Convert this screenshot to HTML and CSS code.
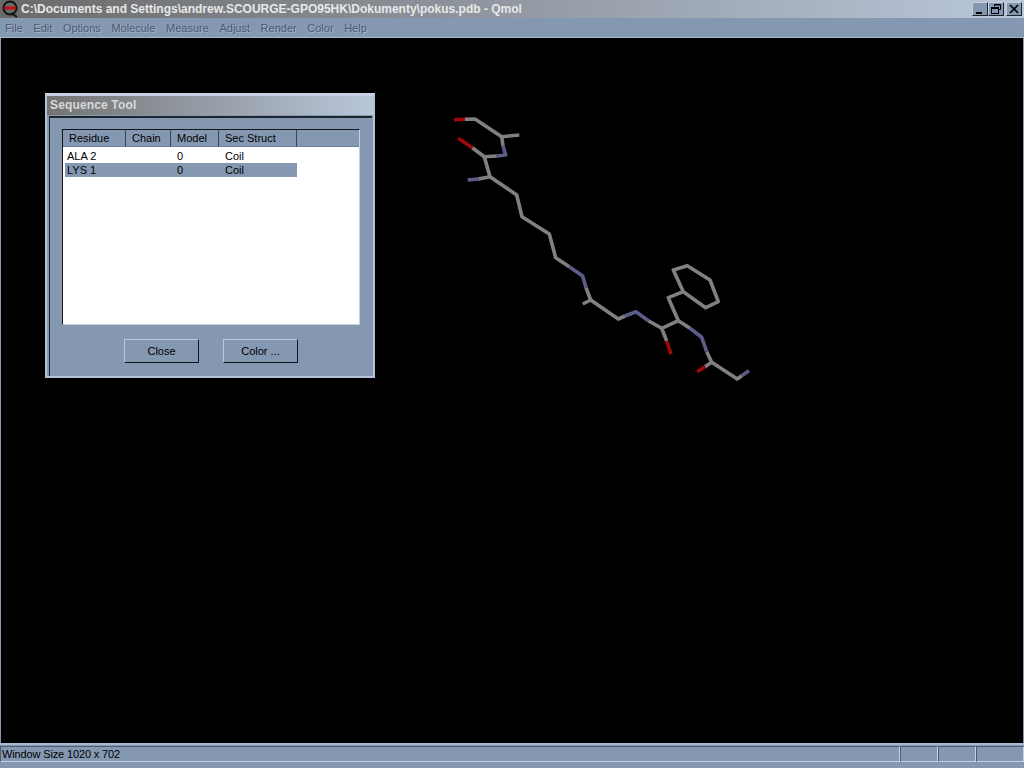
FILE: index.html
```html
<!DOCTYPE html>
<html lang="en">
<head>
    <meta charset="UTF-8">
    <title>pokus.pdb - Qmol</title>
    <link rel="stylesheet" href="styles.css">
</head>
<body>
    <div class="app">
        <div class="titlebar">
            <svg class="app-icon" width="18" height="18" viewBox="0 0 18 18">
                <circle cx="9" cy="8" r="6.5" fill="none" stroke="#111" stroke-width="2"/>
                <path d="M3 8H15" stroke="#c01010" stroke-width="3"/>
                <path d="M10 13L16 17" stroke="#111" stroke-width="2"/>
            </svg>
            <span class="title-text">C:\Documents and Settings\andrew.SCOURGE-GPO95HK\Dokumenty\pokus.pdb - Qmol</span>
            <div class="win-buttons">
                <button class="win-btn">
                    <svg width="14" height="12" viewBox="0 0 14 12"><path d="M3 10H9" stroke="#000" stroke-width="2"/></svg>
                </button>
                <button class="win-btn">
                    <svg width="14" height="12" viewBox="0 0 14 12" fill="none" stroke="#000"><path d="M5.5 3.5V1.5H11.5V6.5H9.5"/><path d="M5.5 2H11.5"/><rect x="2.5" y="4.5" width="7" height="6"/><path d="M2.5 5.5H9.5"/></svg>
                </button>
                <button class="win-btn close">
                    <svg width="14" height="12" viewBox="0 0 14 12"><path d="M3 2L11 10M11 2L3 10" stroke="#000" stroke-width="1.6"/></svg>
                </button>
            </div>
        </div>

        <div class="menubar">
            <span class="menu-item">File</span>
            <span class="menu-item">Edit</span>
            <span class="menu-item">Options</span>
            <span class="menu-item">Molecule</span>
            <span class="menu-item">Measure</span>
            <span class="menu-item">Adjust</span>
            <span class="menu-item">Render</span>
            <span class="menu-item">Color</span>
            <span class="menu-item">Help</span>
        </div>

        <div class="canvas">
            <svg class="molecule" width="1024" height="768" viewBox="0 0 1024 768">
                <g class="bond">
                    <polyline points="465,119.3 475,119 501.7,136.7 503,146"/>
                    <polyline points="501.7,136.7 519.3,135"/>
                    <polyline points="496.7,156 484.3,156.7 472.3,147.7"/>
                    <polyline points="484.3,156.7 490,176.7 478.3,179"/>
                    <polyline points="490,176.7 516.7,195 522,216.7 549.3,234 555.7,257.7 569.3,266.7"/>
                    <polyline points="586,287.7 590.7,300 582.7,304"/>
                    <polyline points="590.7,300 618.3,319 625,316"/>
                    <polyline points="648.3,320.7 661.7,328.3 678.3,320.7 668.3,297.7 683.3,291.7"/>
                    <polyline points="683.3,291.7 673.3,270 687.3,265.7 710,280 718.3,301.7 705.7,307.7 683.3,291.7"/>
                    <polyline points="661.7,328.3 666.7,341"/>
                    <polyline points="678.3,320.7 690,328.3"/>
                    <polyline points="706.7,351.7 711.7,362.3 705,366.7"/>
                    <polyline points="711.7,362.3 737.3,379 741.7,375.7"/>
                </g>
                <g class="bond nitrogen">
                    <polyline points="503,146 505.7,155 496.7,156"/>
                    <polyline points="478.3,179 467.7,180"/>
                    <polyline points="569.3,266.7 582.7,276 586,287.7"/>
                    <polyline points="625,316 636,311.7 648.3,320.7"/>
                    <polyline points="690,328.3 701.7,337.3 706.7,351.7"/>
                    <polyline points="741.7,375.7 749,370.7"/>
                </g>
                <g class="bond oxygen">
                    <polyline points="454,119.7 465,119.3"/>
                    <polyline points="472.3,147.7 458.3,138.3"/>
                    <polyline points="666.7,341 671,354.3"/>
                    <polyline points="705,366.7 697.3,371.7"/>
                </g>
            </svg>

            <div class="dialog">
                <div class="dialog-title">Sequence Tool</div>
                <div class="dialog-body">
                    <div class="list">
                        <table class="seq-table">
                            <thead>
                                <tr>
                                    <th class="col-residue">Residue</th>
                                    <th class="col-chain">Chain</th>
                                    <th class="col-model">Model</th>
                                    <th class="col-struct">Sec Struct</th>
                                    <th class="col-rest"></th>
                                </tr>
                            </thead>
                            <tbody>
                                <tr>
                                    <td>ALA 2</td><td></td><td>0</td><td>Coil</td><td class="cell-empty"></td>
                                </tr>
                                <tr class="selected">
                                    <td>LYS 1</td><td></td><td>0</td><td>Coil</td><td class="cell-empty"></td>
                                </tr>
                            </tbody>
                        </table>
                    </div>
                    <div class="dialog-buttons">
                        <button class="push-btn">Close</button>
                        <button class="push-btn">Color ...</button>
                    </div>
                </div>
            </div>
        </div>

        <div class="statusbar">
            <div class="status-panel status-main">Window Size 1020 x 702</div>
            <div class="status-panel status-small"></div>
            <div class="status-panel status-small"></div>
            <div class="status-panel status-last"></div>
        </div>
    </div>
</body>
</html>
```

FILE: styles.css
```css
html, body {
    margin: 0;
    padding: 0;
}
body {
    width: 1024px;
    height: 768px;
    overflow: hidden;
    background-color: #8598b2;
    font-family: 'Liberation Sans', Arial, sans-serif;
    font-size: 11px;
    color: #000;
}
.app {
    display: flex;
    flex-direction: column;
    height: 768px;
}

/* title bar */
.titlebar {
    display: flex;
    align-items: center;
    height: 18px;
    flex: none;
    background: linear-gradient(to right, #6a6a6a, #b9c7da);
    color: #e8e8e8;
    font-size: 12px;
    font-weight: bold;
    white-space: nowrap;
}
.app-icon {
    flex: none;
    margin-left: 1px;
    margin-right: 2px;
}
.win-buttons {
    display: flex;
    margin-left: auto;
    margin-right: 2px;
}
.win-btn {
    width: 16px;
    height: 14px;
    padding: 0;
    display: flex;
    align-items: center;
    justify-content: center;
    background-color: #8598b2;
    border: 1px solid;
    border-color: #c4d0e0 #20242c #20242c #c4d0e0;
}
.win-btn.close {
    margin-left: 2px;
}

/* menu */
.menubar {
    display: flex;
    align-items: center;
    height: 19px;
    flex: none;
    padding-left: 5px;
    gap: 10.6px;
    background-color: #8598b2;
    color: #4a5a72;
    text-shadow: 1px 1px 0 #a3b2c7;
    border-bottom: 1px solid #a9b8cc;
}

/* gl view */
.canvas {
    position: relative;
    flex: 1;
    margin: 0 1px;
    background-color: #000;
}
.molecule {
    position: absolute;
    left: -1px;
    top: -38px;
    filter: blur(0.4px);
}
.bond polyline {
    fill: none;
    stroke: #808080;
    stroke-width: 3.6;
    stroke-linejoin: round;
}
.bond.nitrogen polyline {
    stroke: #5c5c8a;
}
.bond.oxygen polyline {
    stroke: #a00808;
}

/* dialog */
.dialog {
    position: absolute;
    left: 44px;
    top: 55px;
    width: 326px;
    height: 280px;
    display: flex;
    flex-direction: column;
    background-color: #8598b2;
    border: 2px solid #b4c2d6;
    border-top: 3px solid #c6d2e2;
}
.dialog-title {
    height: 19px;
    flex: none;
    margin-bottom: 1px;
    padding-left: 3px;
    line-height: 19px;
    font-size: 12px;
    font-weight: bold;
    letter-spacing: 0.15px;
    color: #d8d8d8;
    background: linear-gradient(to right, #737373, #b9c7da);
}
.dialog-body {
    flex: 1;
    margin-left: 2px;
    margin-right: 1px;
    padding: 11px 11px 0 12px;
    border-top: 2px solid #20242c;
    border-left: 1px solid #20242c;
}
.list {
    width: 298px;
    height: 196px;
    background-color: #fff;
    border: 1px solid;
    border-color: #14161a #c4d0e0 #c4d0e0 #14161a;
    box-sizing: border-box;
    overflow: hidden;
}
.seq-table {
    border-collapse: separate;
    border-spacing: 0;
    table-layout: fixed;
    width: 296px;
}
.seq-table th {
    height: 17px;
    padding: 0 0 0 6px;
    box-sizing: border-box;
    font-weight: normal;
    text-align: left;
    background-color: #8598b2;
    border-right: 1px solid #3a4454;
    border-bottom: 1px solid #6e7f98;
}
.col-residue { width: 63px; }
.col-chain { width: 45px; }
.col-model { width: 48px; }
.col-struct { width: 78px; }
.seq-table th.col-rest {
    border-right: none;
}
.seq-table td {
    height: 14px;
    padding: 0 0 0 6px;
    line-height: 14px;
}
.seq-table td:first-child {
    padding-left: 2px;
    border-left: 2px solid #fff;
}
.seq-table tbody tr:first-child td {
    padding-top: 2px;
}
.selected td {
    background-color: #8598b2;
}
.selected td.cell-empty {
    background-color: #fff;
}
.dialog-buttons {
    display: flex;
    justify-content: center;
    gap: 24px;
    width: 298px;
    margin-top: 14px;
}
.push-btn {
    width: 75px;
    height: 24px;
    padding: 0;
    font-family: inherit;
    font-size: 11px;
    color: #000;
    background-color: #8598b2;
    border: 1px solid;
    border-color: #bac7da #14161a #14161a #bac7da;
}

/* status bar */
.statusbar {
    display: flex;
    height: 25px;
    flex: none;
    box-sizing: border-box;
    padding: 1px 0 6px 0;
    border-top: 2px solid #a9b8cc;
    background-color: #8598b2;
}
.status-panel {
    box-sizing: border-box;
    border-top: 1px solid #4f5d72;
    border-left: 1px solid #4f5d72;
    border-bottom: 1px solid #c4d0e0;
    border-right: 1px solid #c4d0e0;
    line-height: 14px;
    padding-left: 1px;
    white-space: nowrap;
}
.status-main {
    width: 900px;
    letter-spacing: -0.14px;
}
.status-small { width: 38px; }
.status-last { flex: 1; }
```
